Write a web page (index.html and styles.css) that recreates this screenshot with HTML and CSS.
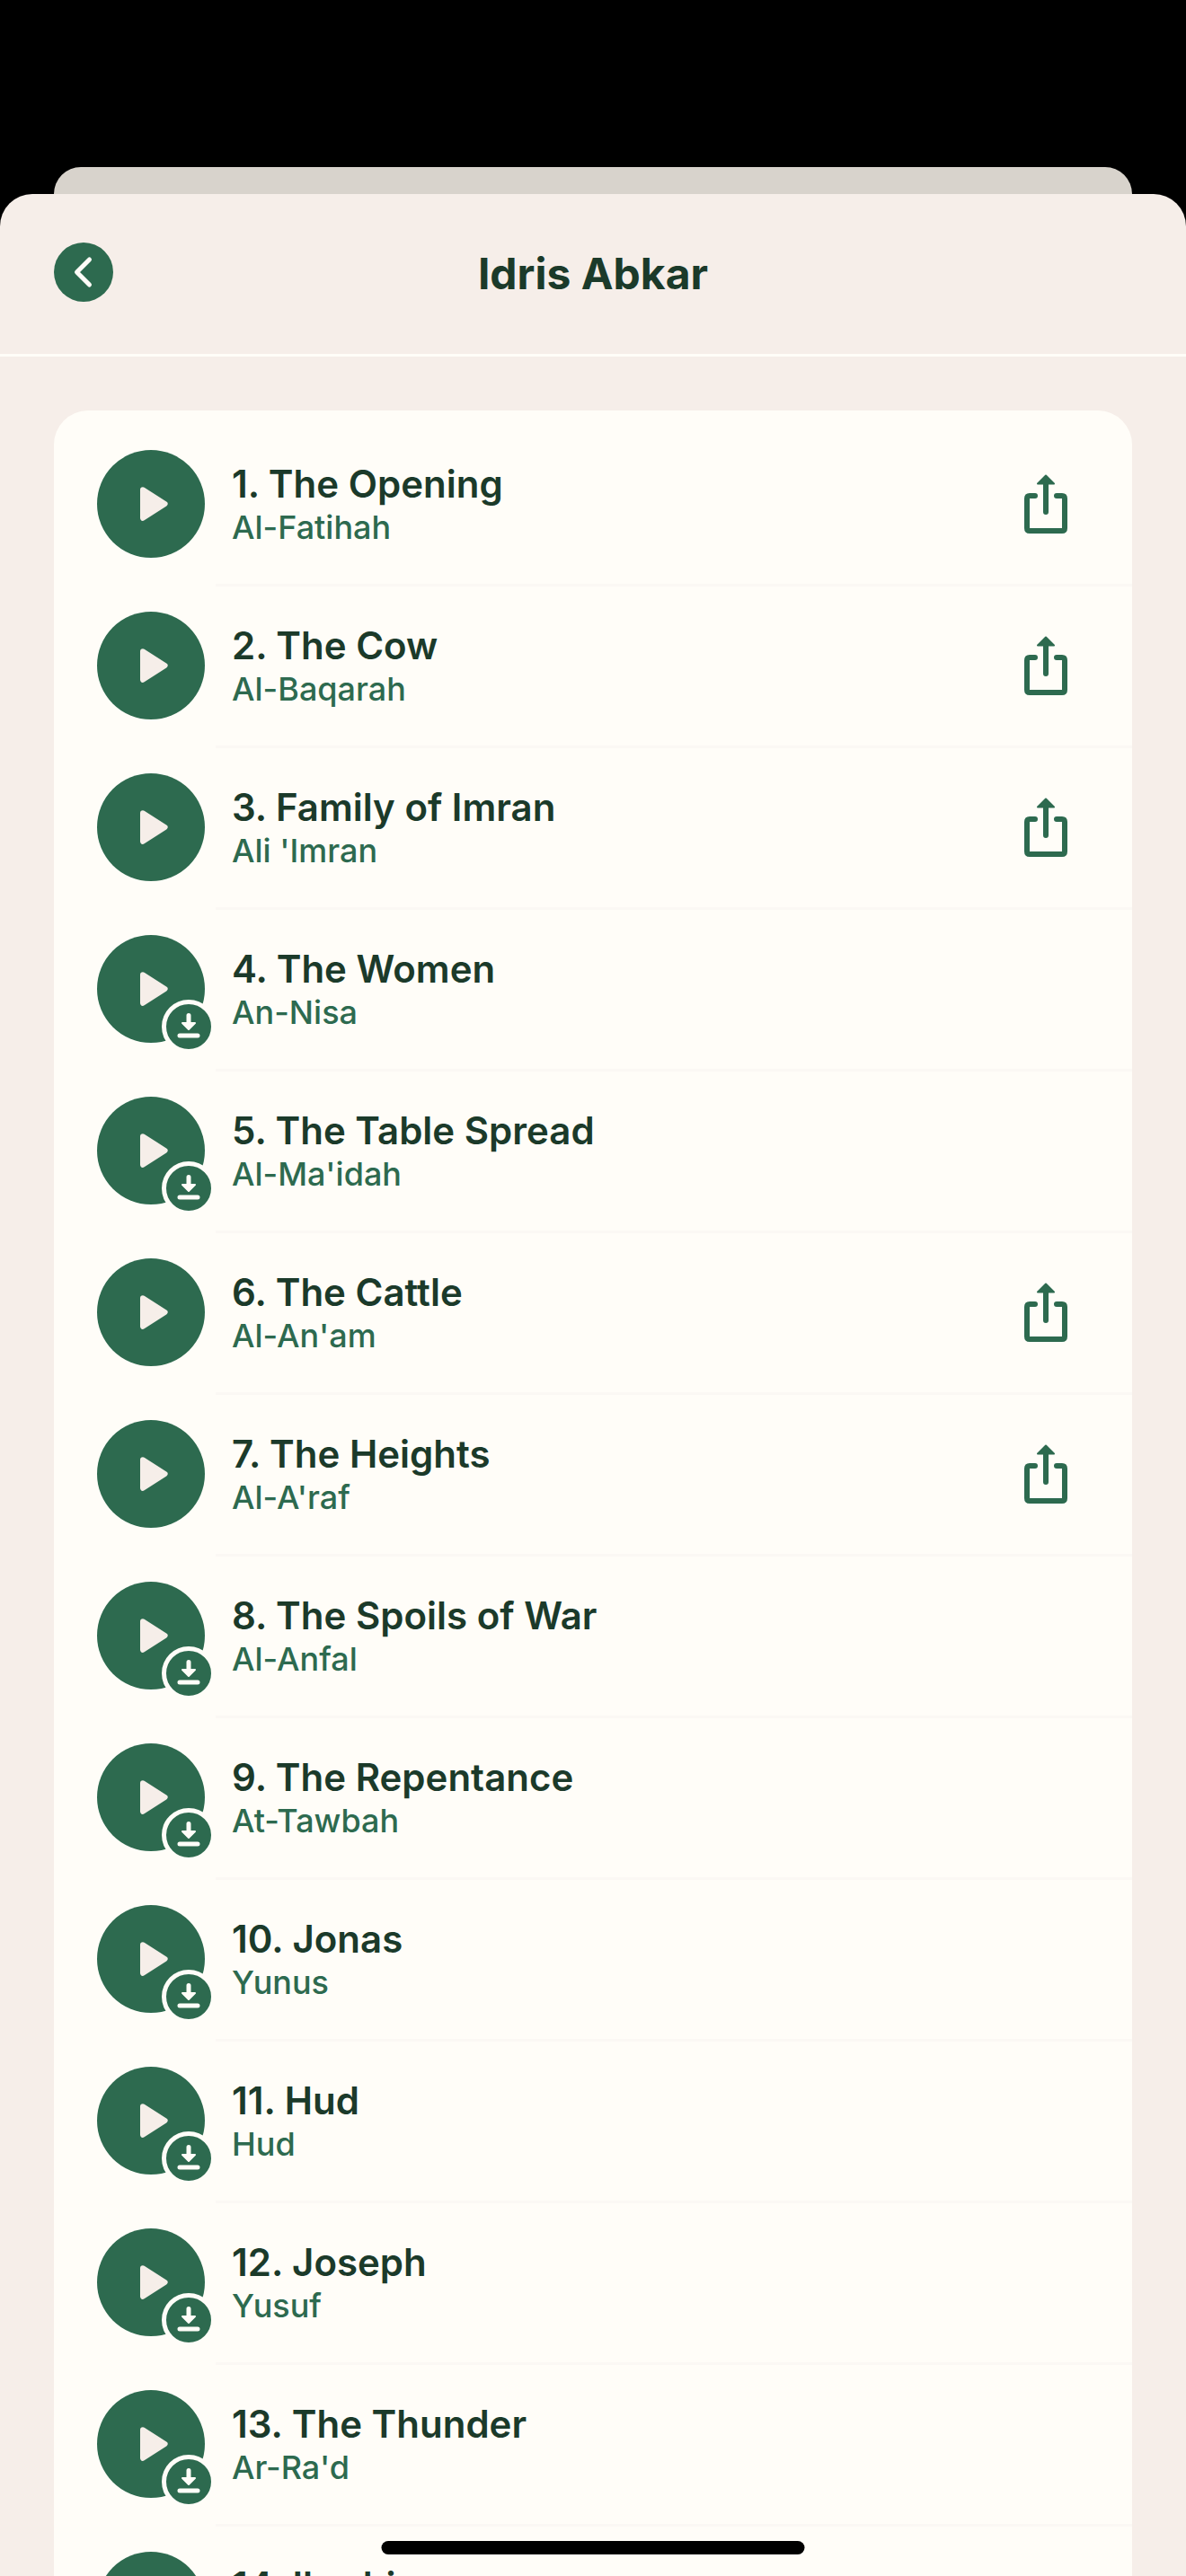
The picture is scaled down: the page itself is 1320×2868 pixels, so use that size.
FILE: index.html
```html
<!DOCTYPE html>
<html lang="en">
<head>
    <meta charset="UTF-8">
    <meta name="viewport" content="width=device-width, initial-scale=1.0">
    <title>Idris Abkar</title>
    <link rel="stylesheet" href="styles.css">
</head>
<body>
    <!-- Shared icons -->
    <svg class="sprite" aria-hidden="true">
        <symbol id="icon-play" viewBox="0 0 120 120">
            <path d="M51 44.200 L75.600 60 L51 75.800 Z" fill="currentColor" stroke="currentColor" stroke-width="6" stroke-linejoin="round"/>
        </symbol>
        <symbol id="icon-download" viewBox="0 0 50 50">
            <path d="M25 12.500 V22 M15 35 H35" fill="none" stroke="currentColor" stroke-width="5" stroke-linecap="round"/>
            <path d="M18 21 H32 L25 28 Z" fill="currentColor" stroke="currentColor" stroke-width="2" stroke-linejoin="round"/>
        </symbol>
        <symbol id="icon-share" viewBox="0 0 48 66">
            <path d="M12 24 H6 Q3 24 3 27 V60 Q3 63 6 63 H42 Q45 63 45 60 V27 Q45 24 42 24 H36 M24 10 V42" fill="none" stroke="currentColor" stroke-width="6" stroke-linecap="round"/>
            <path d="M24 1.500 L33 10.500 H15 Z" fill="currentColor" stroke="currentColor" stroke-width="2" stroke-linejoin="round"/>
        </symbol>
    </svg>

    <div class="app">
        <div class="sheet-behind"></div>
        <main class="sheet">
            <header class="header">
                <button class="back-button" aria-label="Back">
                    <svg width="66" height="66" viewBox="0 0 66 66" fill="none" stroke="currentColor" stroke-width="5" stroke-linecap="round" stroke-linejoin="round">
                        <path d="M39.500 19 L25.500 33 L39.500 47"/>
                    </svg>
                </button>
                <h1 class="title">Idris Abkar</h1>
            </header>

            <div class="content">
                <ul id="surahList" class="card"></ul>
            </div>
        </main>
        <div class="home-indicator"></div>
    </div>

    <script>
        const surahs = [
            { name: 'The Opening', latin: 'Al-Fatihah', downloaded: true },
            { name: 'The Cow', latin: 'Al-Baqarah', downloaded: true },
            { name: 'Family of Imran', latin: "Ali 'Imran", downloaded: true },
            { name: 'The Women', latin: 'An-Nisa', downloaded: false },
            { name: 'The Table Spread', latin: "Al-Ma'idah", downloaded: false },
            { name: 'The Cattle', latin: "Al-An'am", downloaded: true },
            { name: 'The Heights', latin: "Al-A'raf", downloaded: true },
            { name: 'The Spoils of War', latin: 'Al-Anfal', downloaded: false },
            { name: 'The Repentance', latin: 'At-Tawbah', downloaded: false },
            { name: 'Jonas', latin: 'Yunus', downloaded: false },
            { name: 'Hud', latin: 'Hud', downloaded: false },
            { name: 'Joseph', latin: 'Yusuf', downloaded: false },
            { name: 'The Thunder', latin: "Ar-Ra'd", downloaded: false },
            { name: 'Ibrahim', latin: 'Ibrahim', downloaded: false }
        ];

        const badge = `
            <span class="download-badge">
                <svg width="50" height="50"><use href="#icon-download"/></svg>
            </span>
        `;

        // Only downloaded surahs can be shared
        const shareButton = (surah) => `
            <button class="share-button" aria-label="Share ${surah.name}">
                <svg width="48" height="66"><use href="#icon-share"/></svg>
            </button>
        `;

        document.getElementById('surahList').innerHTML = surahs
            .map((surah, index) => `
                <li class="row">
                    <button class="play-button" aria-label="Play ${surah.name}">
                        <svg width="120" height="120"><use href="#icon-play"/></svg>
                        ${surah.downloaded ? '' : badge}
                    </button>
                    <div class="row-text">
                        <h2 class="surah-name">${index + 1}. ${surah.name}</h2>
                        <p class="surah-latin">${surah.latin}</p>
                    </div>
                    ${surah.downloaded ? shareButton(surah) : ''}
                </li>
            `)
            .join('');
    </script>
</body>
</html>
```
FILE: styles.css
```css
:root {
    --green: #2d6a4f;
    --dark: #1b3a2a;
    --background: #f6eee9;
    --card: #fffdf8;
    --divider: #fbf8f4;
    --behind: #d8d3cc;
}

* {
    margin: 0;
    padding: 0;
    box-sizing: border-box;
    font-family: Inter, "Liberation Sans", sans-serif;
}

body {
    background: #000;
    color: var(--dark);
}

button {
    border: none;
    background: none;
    cursor: pointer;
}

svg {
    display: block;
}

.sprite {
    display: none;
}

/* Layout */
.app {
    height: 100vh;
    padding-top: 186px;
    display: flex;
    flex-direction: column;
    position: relative;
    overflow: hidden;
}

.sheet-behind {
    flex: none;
    height: 30px;
    margin: 0 60px;
    background: var(--behind);
    border-radius: 30px 30px 0 0;
}

.sheet {
    flex: 1;
    min-height: 0;
    display: flex;
    flex-direction: column;
    background: var(--background);
    border-radius: 36px 36px 0 0;
    overflow: hidden;
}

/* Header */
.header {
    flex: none;
    display: grid;
    grid-template-columns: 66px 1fr 66px;
    align-items: center;
    padding: 54px 60px 58px;
    border-bottom: 3px solid var(--card);
}

.back-button {
    width: 66px;
    height: 66px;
    border-radius: 50%;
    background: var(--green);
    color: var(--card);
}

.title {
    padding-top: 3px;
    font-size: 48px;
    line-height: 60px;
    font-weight: 700;
    text-align: center;
}

/* Surah list */
.content {
    flex: 1;
    min-height: 0;
    padding: 60px 60px 0;
    overflow-y: auto;
    scrollbar-width: none;
}

.card {
    list-style: none;
    padding: 16px 0;
    background: var(--card);
    border-radius: 38px;
}

.row {
    display: flex;
    align-items: center;
    gap: 30px;
    height: 180px;
    padding: 0 72px 4px 48px;
    background: linear-gradient(var(--divider), var(--divider)) 180px 100% / 100% 3px no-repeat;
}

.play-button {
    flex: none;
    position: relative;
    width: 120px;
    height: 120px;
    border-radius: 50%;
    background: var(--green);
    color: var(--background);
}

.download-badge {
    position: absolute;
    right: -12px;
    bottom: -12px;
    border: 5px solid var(--card);
    border-radius: 50%;
    background: var(--green);
    color: var(--card);
}

.row-text {
    flex: 1;
    min-width: 0;
    padding-top: 4px;
}

.surah-name {
    font-size: 42px;
    line-height: 48px;
    font-weight: 600;
}

.surah-latin {
    font-size: 36px;
    line-height: 48px;
    font-weight: 450;
    color: var(--green);
}

.share-button {
    flex: none;
    color: var(--green);
}

/* Home indicator */
.home-indicator {
    position: absolute;
    left: 50%;
    bottom: 24px;
    width: 471px;
    height: 15px;
    transform: translateX(-50%);
    border-radius: 8px;
    background: #000;
}
```
